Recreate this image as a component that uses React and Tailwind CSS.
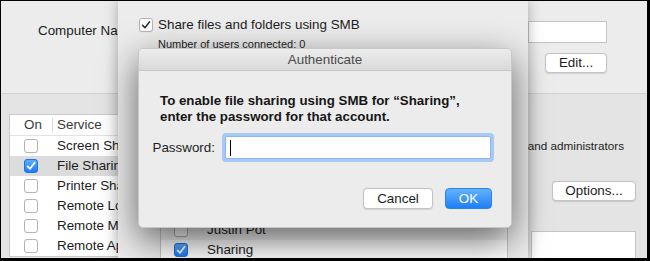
import React from "react";

function Check({ color = "#ffffff", w = 1.8 }) {
  return (
    <svg width="10" height="10" viewBox="0 0 10 10" fill="none">
      <path d="M1.6 5.4 L4 7.8 L8.6 1.8" stroke={color} strokeWidth={w} strokeLinecap="round" strokeLinejoin="round" />
    </svg>
  );
}

function Box({ checked, blue }) {
  if (blue) {
    return (
      <div className="w-[14px] h-[14px] shrink-0 rounded-[3px] border border-[#1b72e2] bg-linear-to-b from-[#5aaefd] to-[#1b7cf5] flex items-center justify-center">
        <Check />
      </div>
    );
  }
  return (
    <div className="w-[14px] h-[14px] shrink-0 rounded-[3px] border border-[#b4b4b4] bg-white flex items-center justify-center shadow-[0_0.5px_0_rgba(0,0,0,0.05)]">
      {checked ? <Check color="#2e2e2e" w={1.5} /> : null}
    </div>
  );
}

const services = [
  ["Screen Sharing", false],
  ["File Sharing", true],
  ["Printer Sharing", false],
  ["Remote Login", false],
  ["Remote Management", false],
  ["Remote Apple Events", false],
];

export default function App() {
  return (
    <div className="w-[650px] h-[261px] bg-black pt-px pl-px pr-[3px] pb-[3px]">
      <div className="relative h-full w-full overflow-hidden bg-[#ececec] text-[13.4px] leading-[16px] text-[#1d1d1d] font-['Liberation_Sans',Arial,sans-serif] flex flex-col">
        {/* top section */}
        <div className="h-[92px] shrink-0 flex justify-between">
          <div className="pl-[37px] pt-[22px] whitespace-nowrap">Computer Name:</div>
          <div className="pr-[40px] pt-[20px] flex flex-col items-end">
            <div className="w-[79px] h-[22px] bg-white border border-[#c3c3c3]" />
            <div className="mt-[10px] w-[62px] h-[20px] rounded-[4px] bg-white border border-[#c4c4c4] shadow-[0_0.5px_1px_rgba(0,0,0,0.12)] flex items-center justify-center">
              Edit...
            </div>
          </div>
        </div>

        {/* lower section */}
        <div className="flex-1 border-t border-[#d2d2d2] bg-[#e4e4e4] flex pt-[20px] pl-[8px]">
          <div className="w-[200px] self-start bg-white border border-[#cacaca]">
            <div className="h-[21px] flex items-center border-b border-[#e2e2e2] text-[#3a3a3a]">
              <span className="w-[42px] pl-[14px]">On</span>
              <div className="w-px h-[15px] bg-[#dcdcdc]" />
              <span className="pl-[4px]">Service</span>
            </div>
            {services.map(([name, on]) => (
              <div key={name} className={"h-[20px] flex items-center " + (on ? "bg-[#dcdcdc]" : "")}>
                <div className="ml-[14px]">
                  <Box blue={on} />
                </div>
                <span className="ml-[19px] whitespace-nowrap">{name}</span>
              </div>
            ))}
          </div>
          <div className="flex-1 flex flex-col items-end">
            <div className="mt-[25px] mr-[23px] text-[11.7px] leading-[14px] whitespace-nowrap">
              on this computer, and administrators
            </div>
            <div className="mt-[28px] mr-[11px] w-[84px] h-[20px] rounded-[4px] bg-white border border-[#c4c4c4] shadow-[0_0.5px_1px_rgba(0,0,0,0.12)] flex items-center justify-center">
              Options...
            </div>
            <div className="mt-[30px] mr-[11px] w-[105px] flex-1 bg-white border border-[#c6c6c6] border-b-0" />
          </div>
        </div>

        {/* sheet */}
        <div className="absolute top-0 bottom-0 left-[117px] w-[410px] bg-[#ececec] shadow-[0_0_12px_rgba(0,0,0,0.3)] pl-[21px] pt-[16px]">
          <div className="h-[15px] flex items-center">
            <Box checked />
            <span className="ml-[5px] whitespace-nowrap">Share files and folders using SMB</span>
          </div>
          <div className="mt-[6px] ml-[19px] text-[11px] leading-[13px] whitespace-nowrap">
            Number of users connected: 0
          </div>
          <div className="mt-[148px] ml-[21px] w-[348px] bg-white border-t border-x border-[#c6c6c6]">
            <div className="h-[20px] flex items-center border-b border-[#e2e2e2] text-[#3a3a3a]">
              <span className="pl-[13px] w-[40px]">On</span>
              <span className="pl-[6px]">Account</span>
            </div>
            <div className="h-[20px] flex items-center bg-[#f2f2f2]">
              <div className="ml-[13px]">
                <Box />
              </div>
              <span className="ml-[19px]">Justin Pot</span>
            </div>
            <div className="h-[20px] flex items-center">
              <div className="ml-[13px]">
                <Box blue />
              </div>
              <span className="ml-[19px]">Sharing</span>
            </div>
          </div>
        </div>

        {/* dialog */}
        <div className="absolute left-[137px] top-[47px] w-[374px] h-[180px] rounded-[5px] bg-[#ececec] border border-[#c8c8c8] shadow-[0_12px_36px_rgba(0,0,0,0.6)] overflow-hidden flex flex-col">
          <div className="h-[22px] shrink-0 flex items-center justify-center border-b border-[#c6c6c6] bg-linear-to-b from-[#ececec] to-[#dadada] text-[#4b4b4b]">
            Authenticate
          </div>
          <div className="pl-[17px] pr-[17px]">
            <div className="pt-[22px] ml-[4px] font-bold text-[13.3px] text-[#161616] whitespace-nowrap">
              To enable file sharing using SMB for “Sharing”,
              <br />
              enter the password for that account.
            </div>
            <div className="mt-[8px] flex items-center">
              <div className="w-[59px] flex justify-end whitespace-nowrap">Password:</div>
              <div className="ml-[7px] w-[272px] h-[29px] rounded-[4px] border-[3px] border-[#a7c9f5] bg-white shadow-[inset_0_0_0_1px_#8db5ef] flex items-center">
                <div className="ml-[5px] w-px h-[16px] bg-black" />
              </div>
            </div>
            <div className="mt-[26px] pr-[2px] flex justify-end gap-[12px]">
              <div className="w-[70px] h-[21px] rounded-[4px] bg-white border border-[#c4c4c4] shadow-[0_0.5px_1px_rgba(0,0,0,0.12)] flex items-center justify-center">
                Cancel
              </div>
              <div className="w-[47px] h-[21px] rounded-[4px] bg-linear-to-b from-[#63b1fd] to-[#1c7ef6] border border-[#2a84f0] text-white flex items-center justify-center">
                OK
              </div>
            </div>
          </div>
        </div>
      </div>
    </div>
  );
}
